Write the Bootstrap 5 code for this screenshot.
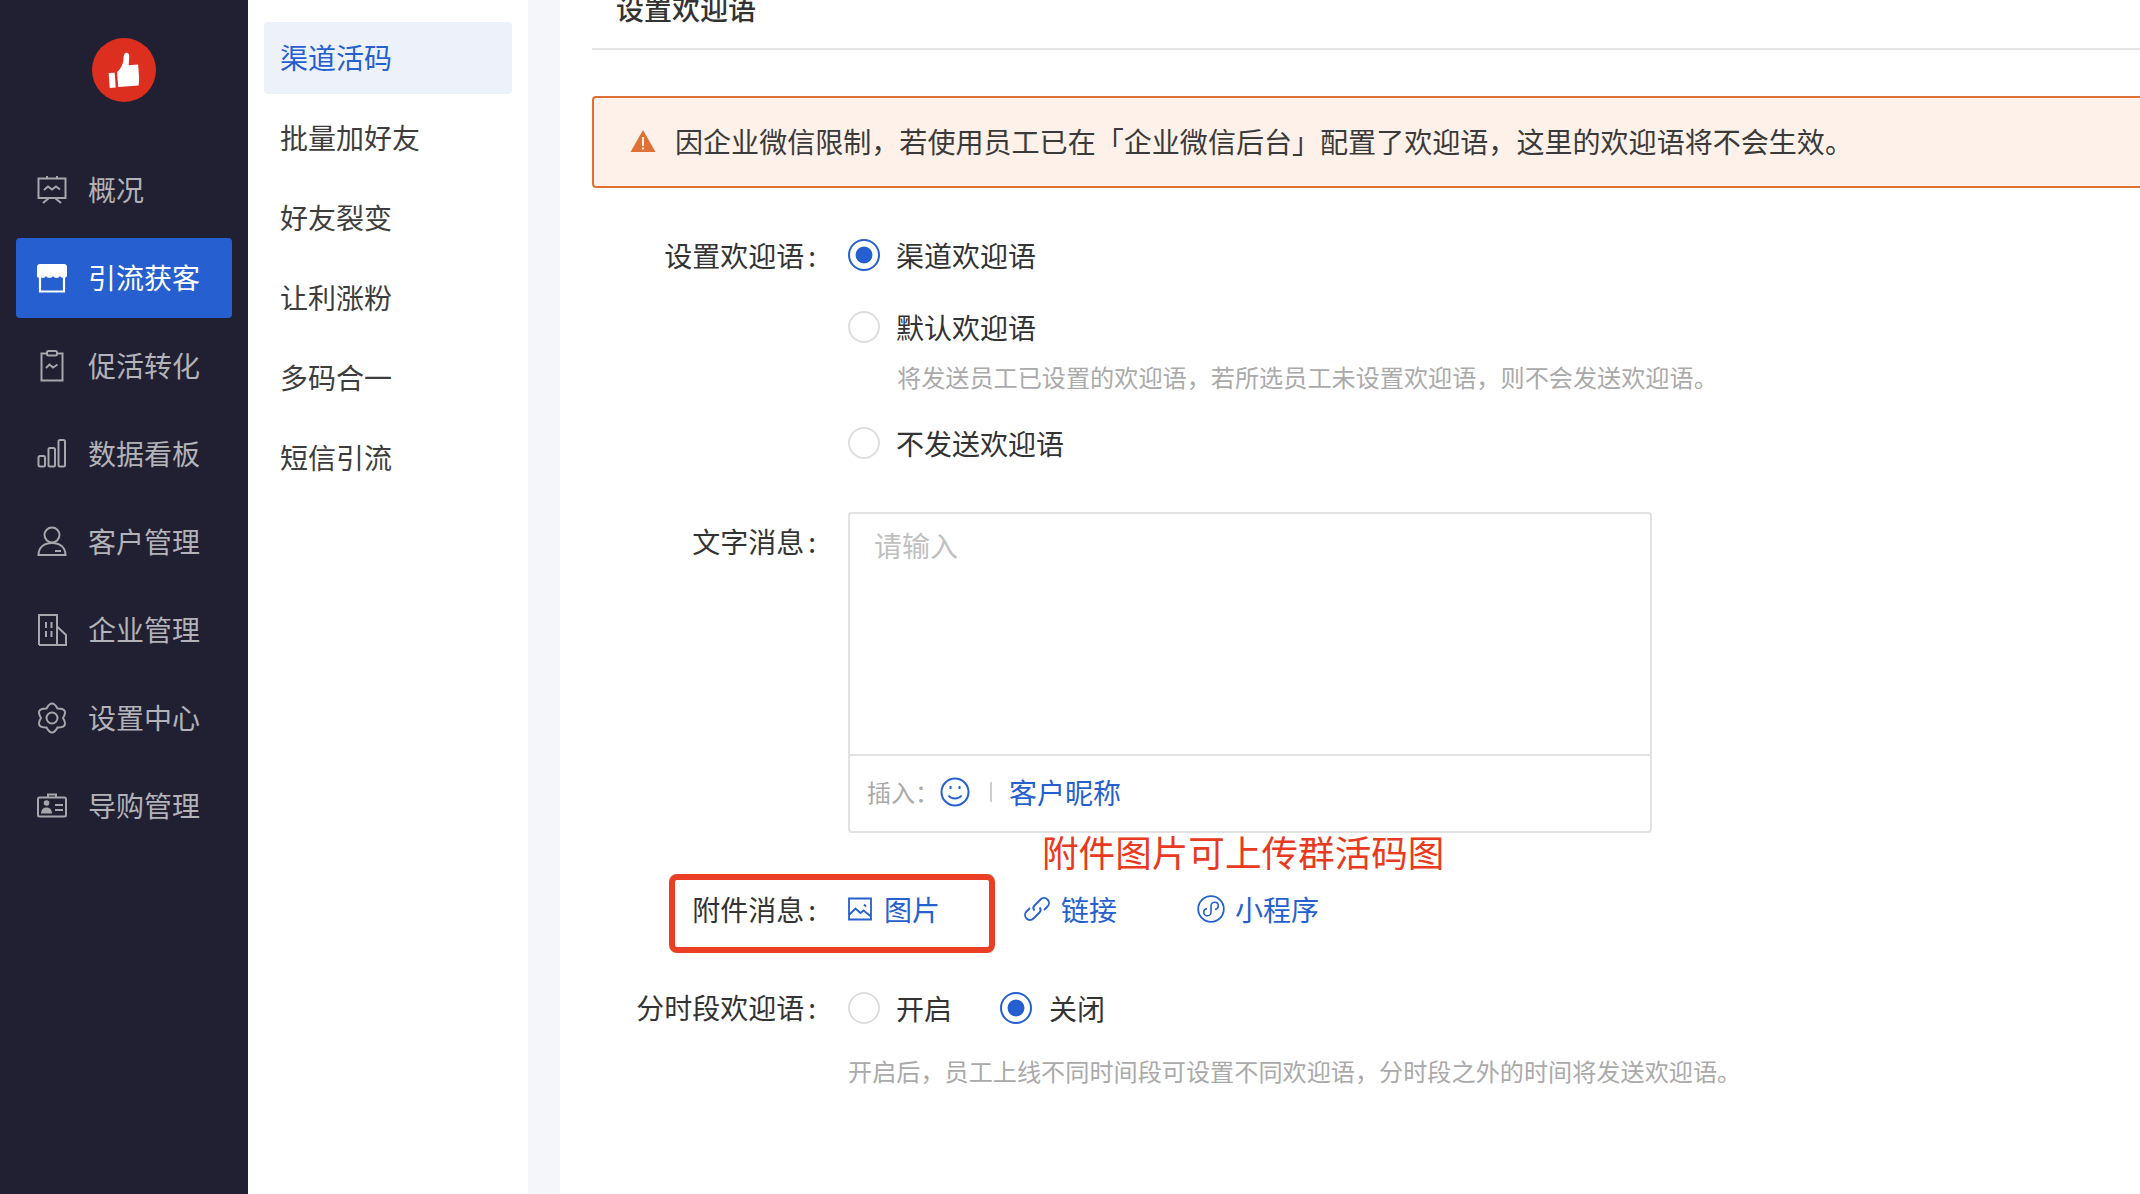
<!DOCTYPE html>
<html lang="zh-CN">
<head>
<meta charset="utf-8">
<title>设置欢迎语</title>
<link rel="stylesheet" href="https://cdn.jsdelivr.net/npm/bootstrap@5.3.0/dist/css/bootstrap.min.css">
<style>
html,body{height:100%;overflow:hidden;background:#fff}
body{font-family:"Noto Sans CJK SC","Liberation Sans",sans-serif;font-size:28px;line-height:40px;color:#333}
.shell{height:1194px;width:2140px;overflow:hidden}
.side{width:248px;background:#202032;flex:none;padding:38px 16px 0}
.logo-mark{width:64px;height:64px;margin:0 auto 48px;display:block}
.side-item{height:80px;border-radius:4px;padding:0 0 2px 21px;gap:21px;color:#b2b2b8;margin-bottom:8px}
.side-item svg{width:30px;height:32px;flex:none;fill:none;stroke:#a6a6ad;stroke-width:2;overflow:visible;margin-top:2px}
.side-item.on{background:#265fcf;color:#fff}
.sub{width:280px;flex:none;padding:22px 16px 0}
.sub-item{height:72px;border-radius:4px;padding:0 0 2px 16px;margin-bottom:8px;color:#3d3d3d}
.sub-item.on{background:#edf1fa;color:#265fcf}
.stripe{width:32px;flex:none;background:#f5f6f9}
.pane{flex:1;min-width:0;padding-left:32px;position:relative;overflow:hidden}
.pane-title{margin-top:-12px;padding:0 0 20px 24px;border-bottom:2px solid #e4e4e4;margin-right:-10px;font-weight:500}
.warn{margin:46px -10px 47px 0;height:92px;border:2px solid #e07033;border-radius:4px;background:#fdf1e9;padding:0 0 2px 36px;gap:19px;color:#3a3a3a;font-size:28.05px}
.warn svg{width:26px;height:24px;flex:none}
.lab{width:224px;flex:none;text-align:right;margin-right:32px;padding-bottom:2px}
.lab-flush{padding-bottom:0}
.pick{gap:17px;height:40px;margin:0}
.gap32{margin-top:32px}
.pick-input.form-check-input{width:32px;height:32px;margin:0 -1px 0 0;border:2px solid #dedede;flex:none;background-image:none}
.pick-input.form-check-input:checked{border-color:#265fcf;background:radial-gradient(circle,#265fcf 0 8px,#fff 8.8px)}
.note{font-size:24.15px;line-height:36px;color:#aaa}
.note-a{margin:12px 0 28px 49px}
.txt{width:804px;height:321px;border:2px solid #e2e2e2;border-radius:4px;margin-top:49px}
.holder{padding:11px 0 0 24px;color:#c0c0c0;height:240px}
.ins{height:77px;border-top:2px solid #e2e2e2;padding:0 0 3px 17px}
.ins-lab{font-size:24px;color:#aaa;width:73px}
.sep{width:2px;height:20px;background:#cfcfcf;margin:0 17px 0 20px}
.lnk{color:#265fcf}
.lnk svg{fill:none;stroke:#265fcf;stroke-width:1.8;flex:none}
.tip{position:absolute;left:482px;top:832px;font-size:36.6px;color:#e83a20;white-space:nowrap}
.hi{position:absolute;left:109px;top:874px;width:326px;height:79px;border:6px solid #ea3e25;border-radius:8px}
.lab-text{margin-top:49px;padding-top:9px}
.row-attach{margin-top:56px;height:40px}
.row-time{margin-top:59px;height:40px}
.note-b{margin:25px 0 0 256px}
.at-pic{margin-left:12px}
.at-link{margin-left:83px}
.at-mini{margin-left:80px}
.at-txt{margin-left:10px}
.far-pick{margin-left:48px}
.far-pick .pick-input.form-check-input{margin-right:0}
</style>
</head>
<body>
<div class="shell d-flex">
  <nav class="side">
    <svg class="logo-mark" viewBox="0 0 64 64"><circle cx="32" cy="32" r="32" fill="#dd2f20"/><g fill="#fff" transform="rotate(-4 32 32)"><rect x="16.500" y="34" width="6" height="15"/><path d="M25 33.500c4-3 7-8 7.500-14 .1-2 1-4.500 3-4.500 2.500 0 3 2.500 2.500 5l-1 7.500h9.500v14l-1 7H25z"/></g></svg>
    <a class="side-item d-flex align-items-center text-decoration-none"><svg viewBox="0 0 30 32"><path d="M1.500 4.500h27V24h-27zM10 4.500V2M20 4.500V2M7 16l4-3.500 4 3 4-3 4 3M12 24l-6 5M18 24l6 5"/></svg><span>概况</span></a>
    <a class="side-item on d-flex align-items-center text-decoration-none"><svg viewBox="0 0 30 32" style="stroke:#fff"><path d="M3 14v15.500h24V14" stroke-width="2.200"/><path d="M3 2h24c1.800 0 3 1.200 3 3v9c-1.200 2.500-5.800 2.500-7 0-1.200 2.500-5.800 2.500-7 0-1.200 2.500-5.800 2.500-7 0-1.200 2.500-4.800 2.500-6 0-1 2-2.700 2.500-3 0V5c0-1.800 1.200-3 3-3z" fill="#fff" stroke="none"/></svg><span>引流获客</span></a>
    <a class="side-item d-flex align-items-center text-decoration-none"><svg viewBox="0 0 30 32"><path d="M10 3.500H4.500v27h21v-27H20"/><rect x="10" y="1" width="10" height="4.500" rx="1.500"/><path d="M9 18l3.500-3.500 3.500 3 4.500-3"/></svg><span>促活转化</span></a>
    <a class="side-item d-flex align-items-center text-decoration-none"><svg viewBox="0 0 30 32"><rect x="1.500" y="18" width="6.500" height="10.500" rx="1.500"/><rect x="11.500" y="10" width="6.500" height="18.500" rx="1.500"/><rect x="21.500" y="2" width="6.500" height="26.500" rx="1.500"/></svg><span>数据看板</span></a>
    <a class="side-item d-flex align-items-center text-decoration-none"><svg viewBox="0 0 30 32"><circle cx="15" cy="9" r="7.500"/><path d="M1.500 29c0-8 6-12 13.500-12s13.500 4 13.500 12zM18 25h6"/></svg><span>客户管理</span></a>
    <a class="side-item d-flex align-items-center text-decoration-none"><svg viewBox="0 0 30 32"><path d="M2 31V1h18v30M2 31h27V21l-9-8.500M9 8v6M14.500 8v6M9 17v6M14.500 17v6"/></svg><span>企业管理</span></a>
    <a class="side-item d-flex align-items-center text-decoration-none"><svg viewBox="0 0 30 32"><circle cx="15" cy="16" r="5.500"/><path d="M9.500 6.470Q15-3.500 20.500 6.470 31.890 6.250 26 16 31.890 25.750 20.500 25.530 15 35.500 9.500 25.530-1.890 25.750 4 16-1.890 6.250 9.500 6.470z"/></svg><span>设置中心</span></a>
    <a class="side-item d-flex align-items-center text-decoration-none"><svg viewBox="0 0 30 32"><rect x="1" y="7.500" width="28" height="19" rx="1.500"/><path d="M11 7.500V4.500h8v3M18 15h8M18 20h8"/><circle cx="9.500" cy="13" r="2.800" fill="#a6a6ad" stroke="none"/><path d="M4 23.500c.3-4.500 2.800-6 5.500-6s5.200 1.500 5.500 6z" fill="#a6a6ad" stroke="none"/></svg><span>导购管理</span></a>
  </nav>
  <aside class="sub">
    <div class="sub-item on d-flex align-items-center">渠道活码</div>
    <div class="sub-item d-flex align-items-center">批量加好友</div>
    <div class="sub-item d-flex align-items-center">好友裂变</div>
    <div class="sub-item d-flex align-items-center">让利涨粉</div>
    <div class="sub-item d-flex align-items-center">多码合一</div>
    <div class="sub-item d-flex align-items-center">短信引流</div>
  </aside>
  <div class="stripe"></div>
  <main class="pane">
    <div class="pane-title">设置欢迎语</div>
    <div class="warn d-flex align-items-center">
      <svg viewBox="0 0 26 24"><path d="M13 1 25.500 23H.5z" fill="#e07033"/><rect x="12" y="8" width="2" height="9" fill="#fdf1e9"/><rect x="12" y="18.500" width="2" height="2" fill="#fdf1e9"/></svg>
      <span>因企业微信限制，若使用员工已在「企业微信后台」配置了欢迎语，这里的欢迎语将不会生效。</span>
    </div>
    <div class="d-flex">
      <div class="lab">设置欢迎语<span class="ms-1">:</span></div>
      <div>
        <label class="pick d-flex align-items-center"><input class="pick-input form-check-input" type="radio" name="a" checked>渠道欢迎语</label>
        <label class="pick gap32 d-flex align-items-center"><input class="pick-input form-check-input" type="radio" name="a">默认欢迎语</label>
        <div class="note note-a">将发送员工已设置的欢迎语，若所选员工未设置欢迎语，则不会发送欢迎语。</div>
        <label class="pick d-flex align-items-center"><input class="pick-input form-check-input" type="radio" name="a">不发送欢迎语</label>
      </div>
    </div>
    <div class="d-flex">
      <div class="lab lab-text">文字消息<span class="ms-1">:</span></div>
      <div class="txt">
        <div class="holder">请输入</div>
        <div class="ins d-flex align-items-center">
          <span class="ins-lab">插入：</span>
          <svg width="30" height="30" viewBox="0 0 30 30" fill="none" stroke="#265fcf" stroke-width="2"><circle cx="15" cy="15" r="13.500"/><path d="M8.500 18.500c3 4 10 4 13 0"/><path d="M10.500 9v3M19.500 9v3"/></svg>
          <span class="sep"></span>
          <span class="lnk">客户昵称</span>
        </div>
      </div>
    </div>
    <div class="row-attach d-flex align-items-center">
      <div class="lab lab-flush">附件消息<span class="ms-1">:</span></div>
      <div class="lnk d-flex align-items-center">
        <svg width="24" height="24" viewBox="0 0 24 24"><path d="M1 1.500h22v21H1zM1 18l6.500-6.500 5 4.500 3-2.500 7.500 6M16 7.500l2 2"/></svg>
        <span class="at-pic">图片</span>
        <svg class="at-link" width="28" height="28" viewBox="0 0 28 28"><path d="M11.500 15.500c-1.500-1.500-1.500-3.500 0-5l6-6c2-2 5-2 7 0s2 5 0 7L21 15M16.500 12.500c1.500 1.500 1.500 3.500 0 5l-6 6c-2 2-5 2-7 0s-2-5 0-7L7 13"/></svg>
        <span class="at-txt">链接</span>
        <svg class="at-mini" width="28" height="28" viewBox="0 0 28 28"><circle cx="14" cy="14" r="12.800"/><path d="M10 13.500c-2 .3-3.300 1.800-3.300 3.700 0 2 1.600 3.600 3.600 3.600s3.700-1.600 3.700-3.600v-6.400c0-2 1.600-3.600 3.700-3.600s3.600 1.600 3.600 3.600c0 1.900-1.300 3.400-3.300 3.700" stroke-width="1.600"/></svg>
        <span class="at-txt">小程序</span>
      </div>
    </div>
    <div class="row-time d-flex align-items-center">
      <div class="lab">分时段欢迎语<span class="ms-1">:</span></div>
      <label class="pick d-flex align-items-center"><input class="pick-input form-check-input" type="radio" name="b">开启</label>
      <label class="pick far-pick d-flex align-items-center"><input class="pick-input form-check-input" type="radio" name="b" checked>关闭</label>
    </div>
    <div class="note note-b">开启后，员工上线不同时间段可设置不同欢迎语，分时段之外的时间将发送欢迎语。</div>
    <div class="tip">附件图片可上传群活码图</div>
    <div class="hi"></div>
  </main>
</div>
</body>
</html>
